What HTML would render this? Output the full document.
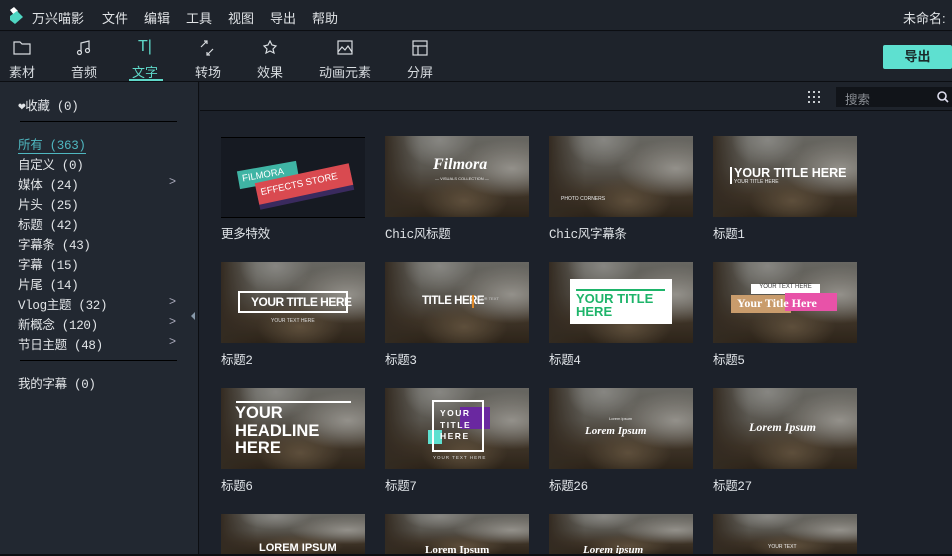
<!DOCTYPE html><html><head><meta charset="utf-8"><style>
*{margin:0;padding:0;box-sizing:border-box}
html{width:952px;height:556px;overflow:hidden}
body{width:952px;height:556px;overflow:hidden;background:#1c212a;font-family:"Liberation Sans","Noto Sans CJK SC",sans-serif;color:#d8dce0;position:relative;font-size:13px}
.a{position:absolute}
#top{left:0;top:0;width:952px;height:31px;background:#1e232b;border-bottom:1px solid #0c0e12}
#tb{left:0;top:32px;width:952px;height:50px;background:#1e232b;border-bottom:1px solid #0c0e12}
.menu{top:8px;font-size:13px;color:#e0e3e6}
.tab{top:62px;font-size:13px;color:#d8dce0;text-align:center}
.ic{top:40px}
#side{left:0;top:82px;width:199px;height:474px;background:#222831;border-right:1px solid #0c0e12}
.li{left:18px;font-size:12.5px;color:#e2e5e8;font-family:"Liberation Mono","Noto Sans CJK SC",monospace;letter-spacing:-0.3px}
.ar{left:169px;color:#aab;font-size:12px}
.ph{width:144px;height:81px;overflow:hidden;background:radial-gradient(ellipse 28% 38% at 38% 5%,#9a9994,transparent 90%),radial-gradient(ellipse 45% 40% at 88% 40%,#a8a59e,transparent 90%),radial-gradient(ellipse 30% 30% at 55% 80%,#6b5a44,transparent),linear-gradient(90deg,#3b3126 0%,transparent 25%),linear-gradient(180deg,#777670 0%,#66625a 40%,#473b2d 72%,#33291d 100%)}
.ph::after{content:"";position:absolute;inset:0;background:rgba(0,0,0,.12)}
.ph>*{position:absolute;z-index:1}
.lb{font-size:12.5px;color:#dfe3e7;font-family:"Liberation Mono","Noto Sans CJK SC",monospace;letter-spacing:-0.3px}
.w{color:#fff;font-weight:bold}
</style></head><body>
<div id="top" class="a"></div>
<svg class="a" style="left:8px;top:7px" width="16" height="18"><path d="M2 3 L6 0 L10 4 L6 8Z" fill="#fff"/><path d="M2 9 L9 4 L15 10 L7 17 L2 13Z" fill="#4fd6c2"/></svg>
<div class="a menu" style="left:32px">万兴喵影</div>
<div class="a menu" style="left:102px">文件</div>
<div class="a menu" style="left:144px">编辑</div>
<div class="a menu" style="left:186px">工具</div>
<div class="a menu" style="left:228px">视图</div>
<div class="a menu" style="left:270px">导出</div>
<div class="a menu" style="left:312px">帮助</div>
<div class="a menu" style="left:903px">未命名:</div>
<div id="tb" class="a"></div>
<svg class="a ic" style="left:13px" width="18" height="16" fill="none" stroke="#d8dce0" stroke-width="1.2"><path d="M1 2h6l2 2h8v10H1z"/></svg>
<svg class="a ic" style="left:76px" width="16" height="16" fill="none" stroke="#d8dce0" stroke-width="1.2"><path d="M5 12V3l8-2v9"/><circle cx="3.5" cy="12.5" r="2"/><circle cx="11.5" cy="10.5" r="2"/></svg>
<div class="a" style="left:138px;top:38px;color:#5fd8c9;font-size:16px">T|</div>
<svg class="a ic" style="left:199px" width="16" height="16" fill="none" stroke="#d8dce0" stroke-width="1.2"><path d="M2 7l6-6M5 1h3v3M14 9l-6 6M11 15H8v-3"/></svg>
<svg class="a ic" style="left:262px" width="16" height="16" fill="none" stroke="#d8dce0" stroke-width="1.2"><path d="M8 1l2 4 4 1-3 3 1 4-4-2-4 2 1-4-3-3 4-1z"/></svg>
<svg class="a ic" style="left:337px" width="16" height="16" fill="none" stroke="#d8dce0" stroke-width="1.2"><rect x="1" y="1" width="14" height="13"/><path d="M1 12l4-5 3 3 3-4 4 6"/></svg>
<svg class="a ic" style="left:412px" width="16" height="16" fill="none" stroke="#d8dce0" stroke-width="1.2"><rect x="1" y="1" width="14" height="14"/><path d="M1 6h14M6 6v9"/></svg>
<div class="a tab" style="left:9px">素材</div>
<div class="a tab" style="left:71px">音频</div>
<div class="a tab" style="left:132px;color:#5fd8c9">文字</div>
<div class="a" style="left:129px;top:79px;width:34px;height:2px;background:#5fd8c9"></div>
<div class="a tab" style="left:195px">转场</div>
<div class="a tab" style="left:257px">效果</div>
<div class="a tab" style="left:319px">动画元素</div>
<div class="a tab" style="left:407px">分屏</div>
<div class="a" style="left:883px;top:45px;width:69px;height:24px;background:#5ee0d0;border-radius:2px;color:#1a2a2a;font-weight:bold;font-size:13px;text-align:center;line-height:24px">导出</div>
<div id="side" class="a"></div>
<div class="a li" style="top:95px">❤收藏 (0)</div>
<div class="a" style="left:20px;top:121px;width:157px;height:1px;background:#000"></div>
<div class="a li" style="top:134px;color:#4fb7c0;border-bottom:1px solid #4fb7c0">所有 (363)</div>
<div class="a li" style="top:154px">自定义 (0)</div>
<div class="a li" style="top:174px">媒体 (24)</div><div class="a ar" style="top:174px">&gt;</div>
<div class="a li" style="top:194px">片头 (25)</div>
<div class="a li" style="top:214px">标题 (42)</div>
<div class="a li" style="top:234px">字幕条 (43)</div>
<div class="a li" style="top:254px">字幕 (15)</div>
<div class="a li" style="top:274px">片尾 (14)</div>
<div class="a li" style="top:294px">Vlog主题 (32)</div><div class="a ar" style="top:294px">&gt;</div>
<div class="a li" style="top:314px">新概念 (120)</div><div class="a ar" style="top:314px">&gt;</div>
<div class="a li" style="top:334px">节日主题 (48)</div><div class="a ar" style="top:334px">&gt;</div>
<div class="a" style="left:20px;top:360px;width:157px;height:1px;background:#000"></div>
<div class="a li" style="top:373px">我的字幕 (0)</div>
<div class="a" style="left:191px;top:312px;width:0;height:0;border:4px solid transparent;border-right-color:#8899aa;border-left:0"></div>
<div class="a" style="left:200px;top:82px;width:752px;height:29px;background:#1e232b;border-bottom:1px solid #0c0e12"></div>
<svg class="a" style="left:807px;top:90px" width="14" height="14" fill="#c8ccd0"><rect x="1" y="1" width="2" height="2"/><rect x="6" y="1" width="2" height="2"/><rect x="11" y="1" width="2" height="2"/><rect x="1" y="6" width="2" height="2"/><rect x="6" y="6" width="2" height="2"/><rect x="11" y="6" width="2" height="2"/><rect x="1" y="11" width="2" height="2"/><rect x="6" y="11" width="2" height="2"/><rect x="11" y="11" width="2" height="2"/></svg>
<div class="a" style="left:836px;top:87px;width:116px;height:20px;background:#111419"></div>
<div class="a" style="left:845px;top:89px;color:#8a8e94;font-size:12.5px">搜索</div>
<svg class="a" style="left:937px;top:91px" width="12" height="12" fill="none" stroke="#dde" stroke-width="1.6"><circle cx="5" cy="5" r="4"/><path d="M8 8l3 3"/></svg>

<div class="a" style="left:221px;top:137px;width:144px;height:81px;background:#161a22;border-top:1px solid #000;border-bottom:1px solid #000;overflow:hidden">
<div class="a" style="left:17px;top:28px;width:60px;height:18px;background:#3fb4a4;transform:rotate(-10deg);color:#fff;font-size:9.5px;padding:3px 4px">FILMORA</div>
<div class="a" style="left:36px;top:40px;width:96px;height:22px;background:#3a2a5e;transform:rotate(-12deg)"></div>
<div class="a" style="left:35px;top:35px;width:96px;height:22px;background:#d94a50;transform:rotate(-12deg);color:#fff;font-size:9.5px;padding:5px 4px;white-space:nowrap">EFFECTS STORE</div>
</div>
<div class="a ph" style="left:385px;top:136px"><div style="left:48px;top:20px;color:#fff;font:italic bold 16px 'Liberation Serif',serif">Filmora</div><div style="left:50px;top:40px;color:#eee;font-size:4px">— VISUALS COLLECTION —</div></div>
<div class="a ph" style="left:549px;top:136px"><div style="left:12px;top:60px;color:#eee;font-size:5px">PHOTO CORNERS</div></div>
<div class="a ph" style="left:713px;top:136px"><div style="left:17px;top:31px;width:2px;height:17px;background:#fff"></div><div class="w" style="left:21px;top:30px;font-size:12.5px">YOUR TITLE HERE</div><div style="left:21px;top:43px;color:#eee;font-size:5px">YOUR TITLE HERE</div></div>
<div class="a lb" style="left:221px;top:223px">更多特效</div>
<div class="a lb" style="left:385px;top:223px">Chic风标题</div>
<div class="a lb" style="left:549px;top:223px">Chic风字幕条</div>
<div class="a lb" style="left:713px;top:223px">标题1</div>

<div class="a ph" style="left:221px;top:262px"><div style="left:17px;top:29px;width:110px;height:22px;border:2px solid #fff"></div><div class="w" style="left:30px;top:33px;font-size:12px;letter-spacing:-.5px">YOUR TITLE HERE</div><div style="left:50px;top:56px;color:#ddd;font-size:5px">YOUR TEXT HERE</div></div>
<div class="a ph" style="left:385px;top:262px"><div class="w" style="left:37px;top:33px;font-size:11.5px;letter-spacing:-.5px">TITLE HERE</div><div style="left:87px;top:33px;width:2px;height:13px;background:#e08a2a"></div><div style="left:91px;top:34px;color:#ccc;font-size:4px">YOUR TEXT</div></div>
<div class="a ph" style="left:549px;top:262px"><div style="left:21px;top:17px;width:102px;height:45px;background:#fff"></div><div style="left:27px;top:27px;width:89px;height:2px;background:#1eb46a"></div><div style="left:27px;top:30px;color:#1eb46a;font-weight:bold;font-size:13px;line-height:13px">YOUR TITLE<br>HERE</div></div>
<div class="a ph" style="left:713px;top:262px"><div style="left:38px;top:22px;width:69px;height:10px;background:#fff;color:#333;font-size:6px;text-align:center">YOUR TEXT HERE</div><div style="left:18px;top:33px;width:60px;height:18px;background:#c99c6c"></div><div style="left:72px;top:31px;width:52px;height:18px;background:#e852a8"></div><div class="w" style="left:24px;top:34px;font:bold 12px 'Liberation Serif',serif;color:#fff">Your Title Here</div></div>
<div class="a lb" style="left:221px;top:349px">标题2</div>
<div class="a lb" style="left:385px;top:349px">标题3</div>
<div class="a lb" style="left:549px;top:349px">标题4</div>
<div class="a lb" style="left:713px;top:349px">标题5</div>

<div class="a ph" style="left:221px;top:388px"><div style="left:15px;top:13px;width:115px;height:2px;background:#fff"></div><div class="w" style="left:14px;top:17px;font-size:16.5px;line-height:17.5px">YOUR<br>HEADLINE<br>HERE</div></div>
<div class="a ph" style="left:385px;top:388px"><div style="left:75px;top:19px;width:30px;height:22px;background:#6a28a0"></div><div style="left:43px;top:42px;width:14px;height:14px;background:#5ee0d0"></div><div style="left:47px;top:12px;width:52px;height:52px;border:2px solid #fff"></div><div class="w" style="left:55px;top:20px;font-size:8.5px;line-height:11.5px;letter-spacing:1.5px">YOUR<br>TITLE<br>HERE</div><div style="left:48px;top:67px;color:#ddd;font-size:4.5px;letter-spacing:1px">YOUR TEXT HERE</div></div>
<div class="a ph" style="left:549px;top:388px"><div style="left:60px;top:28px;color:#eee;font-size:4px">Lorem ipsum</div><div class="w" style="left:36px;top:37px;font:italic bold 11px 'Liberation Serif',serif;color:#fff">Lorem Ipsum</div></div>
<div class="a ph" style="left:713px;top:388px"><div class="w" style="left:36px;top:32px;font:italic bold 12px 'Liberation Serif',serif;color:#fff">Lorem Ipsum</div></div>
<div class="a lb" style="left:221px;top:475px">标题6</div>
<div class="a lb" style="left:385px;top:475px">标题7</div>
<div class="a lb" style="left:549px;top:475px">标题26</div>
<div class="a lb" style="left:713px;top:475px">标题27</div>

<div class="a ph" style="left:221px;top:514px;height:40px"><div class="w" style="left:38px;top:28px;font-size:11px">LOREM IPSUM</div></div>
<div class="a ph" style="left:385px;top:514px;height:40px"><div class="w" style="left:40px;top:30px;font:bold 11px 'Liberation Serif',serif;color:#fff">Lorem Ipsum</div></div>
<div class="a ph" style="left:549px;top:514px;height:40px"><div class="w" style="left:34px;top:30px;font:italic bold 11px 'Liberation Serif',serif;color:#fff">Lorem ipsum</div></div>
<div class="a ph" style="left:713px;top:514px;height:40px"><div style="left:55px;top:30px;color:#eee;font-size:5px">YOUR TEXT</div></div>
<div class="a" style="left:0;top:554px;width:952px;height:2px;background:#0c0e12"></div>
</body></html>
